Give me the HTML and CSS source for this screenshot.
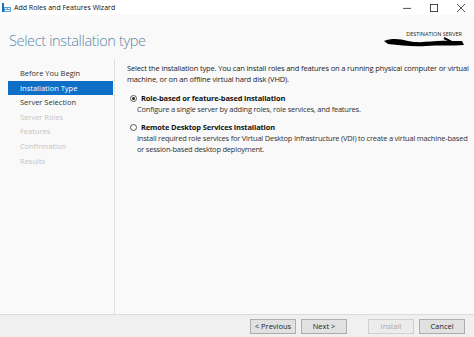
FILE: index.html
```html
<!DOCTYPE html>
<html lang="en">
<head>
  <meta charset="UTF-8" />
  <title>Add Roles and Features Wizard</title>
  <link rel="stylesheet" href="styles.css">
</head>
<body>

  <div class="window">
    <!-- Title bar -->
    <div class="titlebar">
      <svg class="app-icon" width="9" height="9" viewBox="0 0 9 9">
        <rect x="0" y="0" width="2" height="9" fill="#1d6fb8"/>
        <rect x="2" y="4" width="7" height="5" fill="#5aa0d8"/>
        <rect x="3" y="5" width="2" height="1" fill="#fff"/>
        <rect x="6" y="5" width="2" height="1" fill="#fff"/>
        <rect x="3" y="7" width="5" height="1" fill="#fff"/>
      </svg>
      <span class="title-text">Add Roles and Features Wizard</span>
      <div class="controls">
        <span class="ctl">
          <svg width="10" height="10" viewBox="0 0 10 10"><path d="M0 5.5h10" stroke="#222" stroke-width="1"/></svg>
        </span>
        <span class="ctl">
          <svg width="10" height="10" viewBox="0 0 10 10"><rect x="0.5" y="0.5" width="9" height="9" fill="none" stroke="#222" stroke-width="1"/></svg>
        </span>
        <span class="ctl">
          <svg width="10" height="10" viewBox="0 0 10 10"><path d="M0 0L10 10M10 0L0 10" stroke="#222" stroke-width="1"/></svg>
        </span>
      </div>
    </div>

    <!-- Header -->
    <div class="header">
      <h1 class="page-title">Select installation type</h1>
      <div class="dest">
        <span class="dest-label">DESTINATION SERVER</span>
        <svg class="scribble" width="84" height="12" viewBox="0 0 84 12">
          <path d="M2 5 C10 2 18 3 26 5 C40 8 52 4 66 5 L80 5 L82 9 C70 10 56 9 44 10 C30 11 18 9 6 8 Z" fill="#000"/>
          <path d="M62 2 L68 5 L62 7" stroke="#000" stroke-width="2" fill="none"/>
        </svg>
      </div>
    </div>

    <!-- Main -->
    <div class="main">
      <div class="nav">
        <div class="nav-item">Before You Begin</div>
        <div class="nav-item active">Installation Type</div>
        <div class="nav-item">Server Selection</div>
        <div class="nav-item disabled">Server Roles</div>
        <div class="nav-item disabled">Features</div>
        <div class="nav-item disabled">Confirmation</div>
        <div class="nav-item disabled">Results</div>
      </div>

      <div class="content">
        <p class="intro">Select the installation type. You can install roles and features on a running physical computer or virtual machine, or on an offline virtual hard disk (VHD).</p>

        <div class="option">
          <div class="option-head">
            <span class="radio checked"></span>
            <span class="option-title">Role-based or feature-based installation</span>
          </div>
          <p class="option-desc">Configure a single server by adding roles, role services, and features.</p>
        </div>

        <div class="option">
          <div class="option-head">
            <span class="radio"></span>
            <span class="option-title">Remote Desktop Services installation</span>
          </div>
          <p class="option-desc">Install required role services for Virtual Desktop Infrastructure (VDI) to create a virtual machine-based or session-based desktop deployment.</p>
        </div>
      </div>
    </div>

    <!-- Footer -->
    <div class="footer">
      <button class="btn">&lt; Previous</button>
      <button class="btn">Next &gt;</button>
      <button class="btn btn-disabled gap">Install</button>
      <button class="btn">Cancel</button>
    </div>
  </div>

</body>
</html>
```

FILE: styles.css
```css
* {
  box-sizing: border-box;
  margin: 0;
  padding: 0;
}

body {
  font-family: 'Open Sans', 'Noto Sans', sans-serif;
  background: #f9f9f9;
  color: #222;
}

.window {
  width: 474px;
  height: 337px;
  display: flex;
  flex-direction: column;
}

.titlebar {
  height: 15px;
  background: #fff;
  display: flex;
  align-items: center;
  padding-left: 2px;
}

.app-icon {
  margin-right: 3px;
}

.title-text {
  font-size: 7px;
  color: #111;
}

.controls {
  margin-left: auto;
  display: flex;
}

.ctl {
  width: 27px;
  height: 15px;
  display: flex;
  align-items: center;
  justify-content: center;
}

.ctl svg {
  width: 8px;
  height: 8px;
}

.header {
  height: 44px;
  display: flex;
  align-items: flex-start;
  padding: 16px 12px 0 9px;
}

.page-title {
  font-size: 14.5px;
  font-weight: 300;
  letter-spacing: -0.35px;
  color: #5b87a6;
  line-height: 20px;
}

.dest {
  margin-left: auto;
  display: flex;
  flex-direction: column;
  align-items: flex-end;
}

.dest-label {
  font-size: 5.5px;
  color: #222;
  line-height: 6px;
}

.scribble {
  margin-top: -1px;
  margin-right: -4px;
}

.main {
  flex: 1;
  display: flex;
}

.nav {
  width: 115px;
  border-right: 1px solid #e0e0e0;
  padding: 7px 1px 0 8px;
}

.nav-item {
  height: 14.6px;
  line-height: 14.6px;
  font-size: 7.5px;
  padding-left: 12px;
  color: #333;
}

.nav-item.active {
  background: #0f6fc6;
  color: #fff;
}

.nav-item.disabled {
  color: #c4c4c4;
}

.content {
  flex: 1;
  padding: 4px 0 0 12px;
  font-size: 7.5px;
  line-height: 11px;
  letter-spacing: -0.15px;
}

.intro {
  margin-bottom: 8px;
  padding-right: 3px;
}

.option {
  margin-bottom: 7px;
}

.option-head {
  display: flex;
  align-items: center;
  padding-left: 3px;
}

.radio {
  width: 7px;
  height: 7px;
  border: 1px solid #555;
  border-radius: 50%;
  margin-right: 4px;
  background: #fff;
  position: relative;
}

.radio.checked::after {
  content: '';
  position: absolute;
  left: 1px;
  top: 1px;
  width: 3px;
  height: 3px;
  border-radius: 50%;
  background: #222;
}

.option-title {
  font-weight: 700;
  color: #111;
}

.option-desc {
  padding-left: 10px;
  letter-spacing: -0.22px;
  color: #333;
}

.footer {
  height: 23px;
  background: #f0f0f0;
  border-top: 1px solid #dcdcdc;
  display: flex;
  align-items: center;
  justify-content: flex-end;
  padding-right: 9px;
  gap: 5px;
}

.btn {
  width: 46px;
  height: 15px;
  font-family: 'Open Sans', 'Noto Sans', sans-serif;
  font-size: 7.5px;
  background: #e1e1e1;
  border: 1px solid #adadad;
  color: #222;
}

.btn-disabled {
  background: #ececec;
  border-color: #d0d0d0;
  color: #a8a8a8;
}

.gap {
  margin-left: 16px;
}
```
